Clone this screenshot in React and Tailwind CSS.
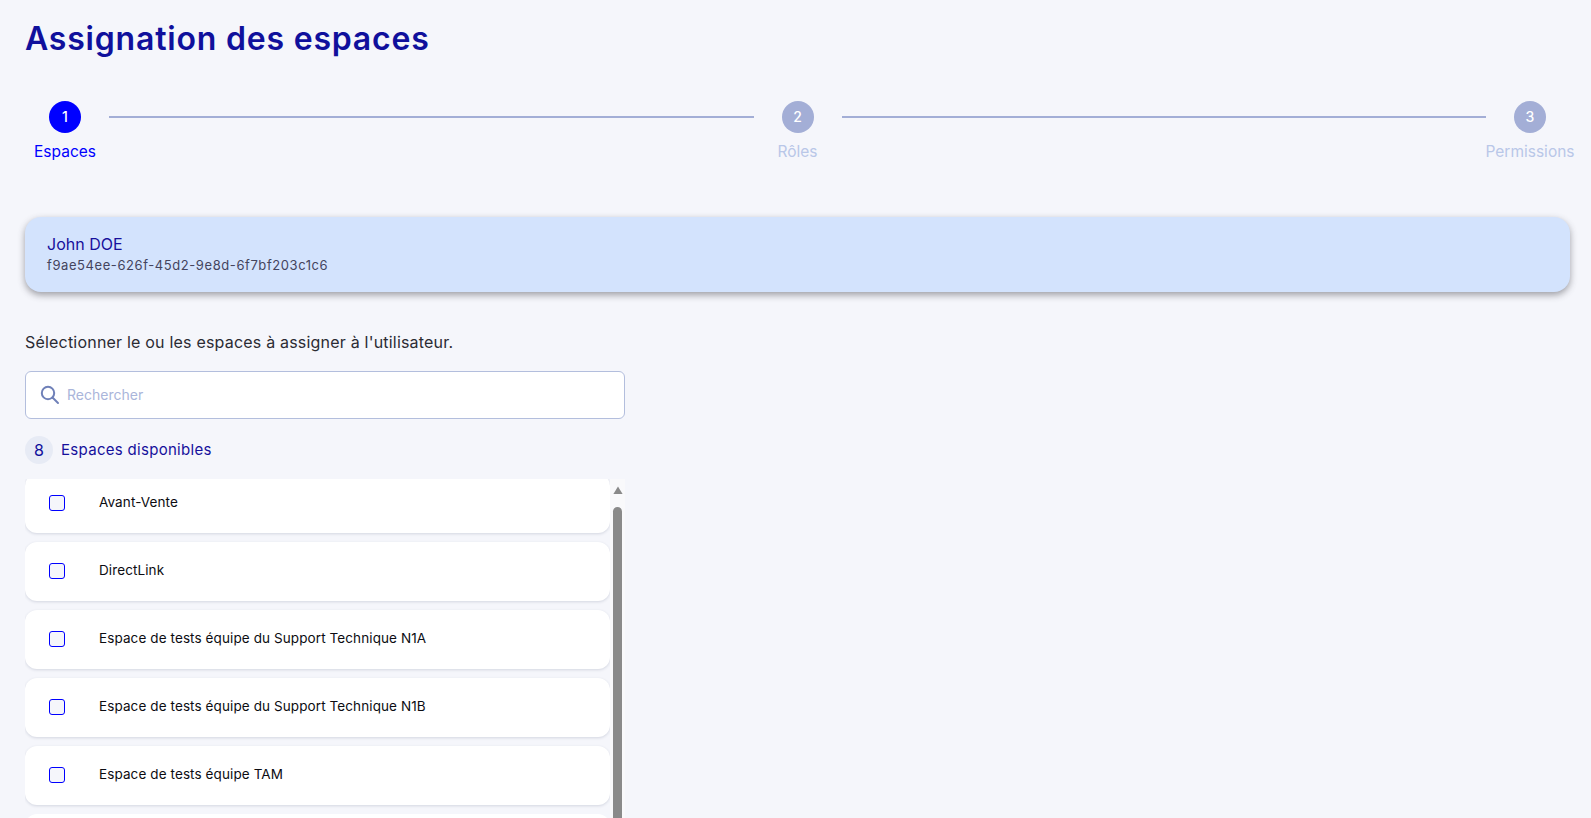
import React from "react";

const spaces = [
  "Avant-Vente",
  "DirectLink",
  "Espace de tests équipe du Support Technique N1A",
  "Espace de tests équipe du Support Technique N1B",
  "Espace de tests équipe TAM",
];

function Step({ n, label, active }) {
  return (
    <div className="flex w-[88px] shrink-0 flex-col items-center">
      <div
        className={`flex h-8 w-8 items-center justify-center rounded-full text-[14px] font-medium leading-none text-white ${
          active ? "bg-[#0000ff]" : "bg-[#a3aed6]"
        }`}
      >
        {n}
      </div>
      <div
        className={`mt-[9px] whitespace-nowrap text-[15.5px] leading-[20px] ${
          active ? "text-[#0000ff]" : "text-[#b9c7e8]"
        }`}
      >
        {label}
      </div>
    </div>
  );
}

function Line() {
  return <div className="mt-[15px] h-[2px] flex-1 bg-[#a3aed6]" />;
}

function Row({ label }) {
  return (
    <div className="flex h-[59px] shrink-0 items-start rounded-[12px] bg-white pl-6 pt-[20px] shadow-[0_1px_3px_rgba(40,50,90,0.16)]">
      <span className="mt-[1px] h-4 w-4 shrink-0 rounded-[3px] border border-[#0000ff] bg-[#f5f6fb]" />
      <span className="ml-[34px] text-[13.5px] leading-[16px] tracking-[0.1px] text-[#0c0c12]">{label}</span>
    </div>
  );
}

export default function App() {
  return (
    <div
      className="h-screen overflow-hidden bg-[#f5f6fb] pl-[25px] pr-[21px] pt-[17px]"
      style={{ fontFamily: "Inter, 'Noto Sans', sans-serif" }}
    >
      <h1 className="text-[32px] font-semibold leading-[44px] tracking-[0.8px] text-[#10109c]">
        Assignation des espaces
      </h1>

      <div className="ml-[-4px] mr-[-4px] mt-[40px] flex items-start">
        <Step n="1" label="Espaces" active />
        <Line />
        <Step n="2" label="Rôles" />
        <Line />
        <Step n="3" label="Permissions" />
      </div>

      <div className="mt-[55px] flex h-[75px] flex-col justify-center rounded-[16px] bg-[#d3e3fd] px-[22px] pb-[2px] shadow-[0_3px_7px_rgba(50,50,60,0.45)]">
        <div className="text-[16px] leading-[22px] text-[#17109c]">John DOE</div>
        <div className="text-[13px] leading-[20px] tracking-[0.58px] text-[#44445e]">
          f9ae54ee-626f-45d2-9e8d-6f7bf203c1c6
        </div>
      </div>

      <p className="mt-[39px] text-[16px] leading-[22px] tracking-[0.2px] text-[#2b2b33]">
        Sélectionner le ou les espaces à assigner à l'utilisateur.
      </p>

      <div className="mt-[18px] flex h-[48px] w-[600px] items-center rounded-[6px] border border-[#b3bedd] bg-white pb-[2px] pl-[14px]">
        <svg width="20" height="20" viewBox="0 0 20 20" fill="none" stroke="#6f80b8" strokeWidth="2" className="mt-[2px]">
          <circle cx="8" cy="8" r="6.2" />
          <path d="M12.5 12.5l5.5 5.5" strokeLinecap="round" />
        </svg>
        <span className="ml-[7px] text-[14px] text-[#aab5da]">Rechercher</span>
      </div>

      <div className="mt-[17px] flex h-[28px] items-center">
        <span className="flex h-7 w-7 items-center justify-center rounded-full bg-[#e7ebf5] text-[16px] text-[#10109c]">
          8
        </span>
        <span className="ml-2 text-[15px] tracking-[0.3px] text-[#15109c]">Espaces disponibles</span>
      </div>

      <div className="mt-[15px] flex h-[340px] w-[600px] overflow-hidden">
        <div className="flex w-[585px] shrink-0 flex-col overflow-hidden">
          <div className="-mt-[5px] flex flex-col gap-[9px]">
            {spaces.map((s) => (
              <Row key={s} label={s} />
            ))}
            <div className="h-[59px] shrink-0 rounded-[12px] bg-white" />
          </div>
        </div>
        <div className="flex w-[15px] shrink-0 flex-col items-center bg-[#f9f9fb] pt-[7px]">
          <svg width="10" height="8" viewBox="0 0 10 8" className="shrink-0">
            <path d="M5 0.5L9.6 8H0.4z" fill="#8a8a8a" />
          </svg>
          <div className="mt-[13px] w-[9px] flex-1 rounded-t-[5px] bg-[#8a8a8a]" />
        </div>
      </div>
    </div>
  );
}
